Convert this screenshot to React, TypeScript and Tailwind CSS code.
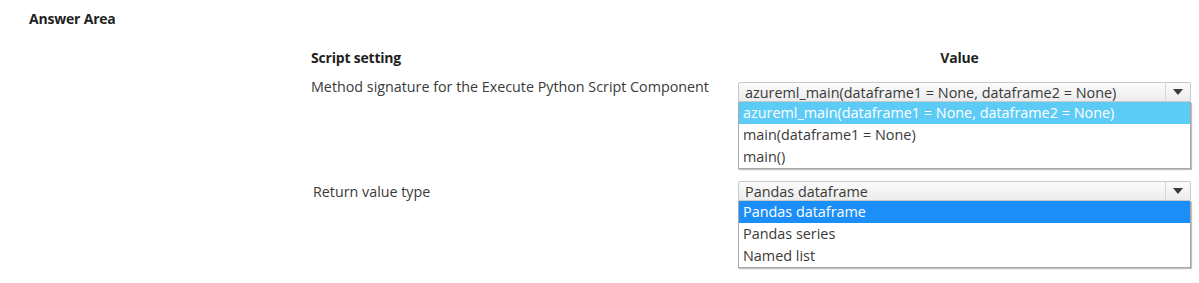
import React from 'react';

const font = { fontFamily: '"Open Sans", "Noto Sans", sans-serif' };

function Caret() {
    return (
        <svg width="10" height="6" viewBox="0 0 10 6" className="block">
            <path d="M0 0 L10 0 L5 6 Z" fill="#3b3b3b" />
        </svg>
    );
}

type DropProps = {
    value: string;
    options: string[];
    selected: number;
    highlight: string;
};

function OpenSelect({ value, options, selected, highlight }: DropProps) {
    return (
        <div className="w-[453px]">
            <div className="flex h-[20px] items-stretch border border-[#c9c9c9] rounded-t-[2px] bg-gradient-to-b from-[#fbfbfb] to-[#ececec]">
                <div className="flex-1 pl-[6px] text-[14.4px] leading-[19px] text-[#3a3a3a] truncate">{value}</div>
                <div className="w-[25px] border-l border-[#d6d6d6] flex items-center justify-center">
                    <Caret />
                </div>
            </div>
            <div className="border border-[#a8a8a8] border-t-0 bg-white shadow-[1px_1px_1px_rgba(0,0,0,0.25)]">
                {options.map((opt, i) => (
                    <div
                        key={opt}
                        className={`h-[22px] pl-[4px] text-[14.4px] leading-[22px] ${i === selected ? 'text-white ' + highlight : 'text-[#3a3a3a]'}`}
                    >
                        {opt}
                    </div>
                ))}
            </div>
        </div>
    );
}

export default function App() {
    return (
        <div className="w-[1199px] h-[283px] bg-white overflow-hidden" style={font}>
            <div className="pt-[9px] pl-[29px] text-[14px] leading-[20px] font-bold text-[#1f1f1f] tracking-[-0.2px]">
                Answer Area
            </div>

            <div className="pl-[311px] pt-[18px]">
                <div className="flex h-[20px] items-center text-[14px] font-bold text-[#1f1f1f] tracking-[-0.2px]">
                    <div className="w-[427px]">Script setting</div>
                    <div className="w-[453px] text-center pr-[10px]">Value</div>
                </div>

                <div className="flex mt-[15px]">
                    <div className="w-[427px] text-[14.3px] leading-[18px] text-[#3a3a3a] -mt-[4px]">
                        Method signature for the Execute Python Script Component
                    </div>
                    <OpenSelect
                        value="azureml_main(dataframe1 = None, dataframe2 = None)"
                        options={[
                            'azureml_main(dataframe1 = None, dataframe2 = None)',
                            'main(dataframe1 = None)',
                            'main()',
                        ]}
                        selected={0}
                        highlight="bg-[#5ccbf6]"
                    />
                </div>

                <div className="flex mt-[12px]">
                    <div className="w-[427px] pl-[2px] text-[14.3px] leading-[18px] text-[#3a3a3a] pt-[2px]">
                        Return value type
                    </div>
                    <OpenSelect
                        value="Pandas dataframe"
                        options={['Pandas dataframe', 'Pandas series', 'Named list']}
                        selected={0}
                        highlight="bg-[#1b8ef8]"
                    />
                </div>
            </div>
        </div>
    );
}
